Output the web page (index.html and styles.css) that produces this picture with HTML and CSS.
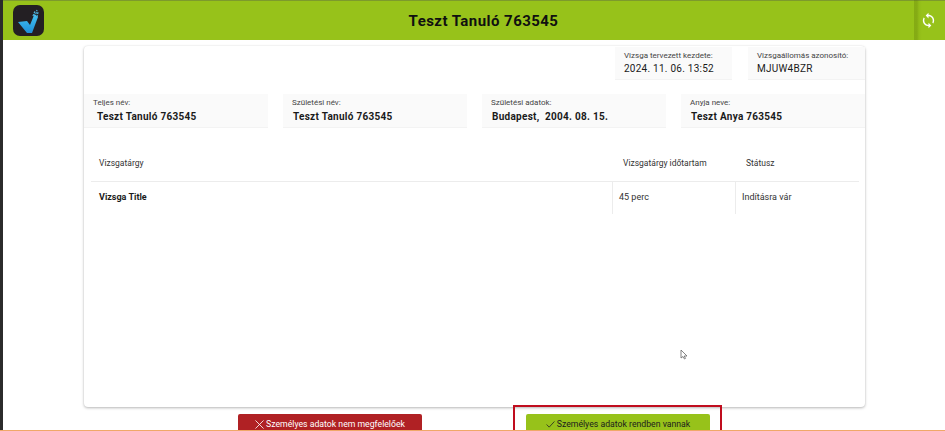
FILE: index.html
```html
<!DOCTYPE html>
<html lang="hu">
<head>
<meta charset="utf-8">
<title>Teszt Tanuló 763545</title>
<link rel="stylesheet" href="styles.css">
</head>
<body>
<div class="strip"></div>
<div class="app">
  <header class="topbar">
    <div class="logo">
      <svg viewBox="0 0 31 31" width="31" height="31">
        <defs>
          <linearGradient id="tick" x1="0" y1="0" x2="0" y2="1">
            <stop offset="0" stop-color="#46c3f2"/>
            <stop offset="1" stop-color="#1d8fd8"/>
          </linearGradient>
        </defs>
        <rect width="31" height="31" rx="7" fill="#231f23"/>
        <path d="M5 17 L14 16 L17 20 L21.500 9 L25 12 L19 28 L14 28 Z" fill="url(#tick)"/>
        <path d="M20 11l2-5M22 12l2-7M24 12l1-5" stroke="#4fb8e6" stroke-width="1.200" stroke-dasharray="2 1" fill="none"/>
      </svg>
    </div>
    <h1 class="title">Teszt Tanuló 763545</h1>
    <button class="refresh" aria-label="Frissítés">
      <svg viewBox="0 0 24 24" width="17" height="17" fill="#fff"><path d="M12 4V1L8 5l4 4V6c3.310 0 6 2.690 6 6 0 1.010-.25 1.970-.7 2.800l1.460 1.460C19.540 15.030 20 13.570 20 12c0-4.420-3.580-8-8-8zm0 14c-3.310 0-6-2.690-6-6 0-1.010.25-1.970.7-2.800L5.240 7.740C4.460 8.970 4 10.430 4 12c0 4.420 3.580 8 8 8v3l4-4-4-4v3z"/></svg>
    </button>
  </header>
  <main class="content">
    <section class="card">
      <div class="row row-top">
        <div class="info small"><span class="label">Vizsga tervezett kezdete:</span><span class="value plain">2024. 11. 06. 13:52</span></div>
        <div class="info small"><span class="label">Vizsgaállomás azonosító:</span><span class="value plain">MJUW4BZR</span></div>
      </div>
      <div class="row row-people">
        <div class="info"><span class="label">Teljes név:</span><span class="value indented">Teszt Tanuló 763545</span></div>
        <div class="info"><span class="label">Születési név:</span><span class="value">Teszt Tanuló 763545</span></div>
        <div class="info"><span class="label">Születési adatok:</span><span class="value">Budapest,&nbsp; 2004. 08. 15.</span></div>
        <div class="info"><span class="label">Anyja neve:</span><span class="value">Teszt Anya 763545</span></div>
      </div>
      <div class="table">
        <div class="cell head first">Vizsgatárgy</div>
        <div class="cell head">Vizsgatárgy időtartam</div>
        <div class="cell head">Státusz</div>
        <div class="cell body first strong">Vizsga Title</div>
        <div class="cell body bar">45 perc</div>
        <div class="cell body bar">Indításra vár</div>
      </div>
    </section>
    <div class="actions">
      <button class="btn btn-red">
        <svg viewBox="0 0 10 10" width="9" height="9"><path d="M.5.5l9 9M9.500.5l-9 9" stroke="#fff" stroke-width=".9" fill="none"/></svg>
        Személyes adatok nem megfelelőek
      </button>
      <div class="highlight">
        <button class="btn btn-green">
          <svg viewBox="0 0 10 8" width="9" height="7"><path d="M.5 4l3 3 6-6.500" stroke="#222" stroke-width=".9" fill="none"/></svg>
          Személyes adatok rendben vannak
        </button>
      </div>
    </div>
  </main>
  <svg class="cursor" viewBox="0 0 8 11" width="8" height="11"><path d="M1 1v8l2-1.500 1.500 2.500 1-.6L4.200 7H7z" fill="#fff" stroke="#666" stroke-width=".8"/></svg>
</div>
<div class="orange-line"></div>
</body>
</html>
```
FILE: styles.css
```css
* { box-sizing: border-box; }
html, body { margin: 0; height: 431px; overflow: hidden; }
body {
  display: flex;
  background: #fff;
  font-family: Roboto, "Liberation Sans", sans-serif;
  color: #212121;
  position: relative;
}
.strip { width: 3px; background: #2b2b2b; flex: none; }
.app { flex: 1; min-width: 0; position: relative; }
.topbar {
  height: 40px;
  background: #97c21a;
  border-top: 1px solid #7d9a2c;
  display: flex;
  align-items: center;
  position: relative;
}
.logo { width: 31px; height: 31px; margin-left: 10px; flex: none; display: flex; }
.title {
  flex: 1;
  margin: 0;
  padding-right: 22px;
  text-align: center;
  font-size: 15px;
  font-weight: 700;
  letter-spacing: .45px;
  color: #101010;
}
.refresh {
  position: absolute;
  right: 0;
  top: -1px;
  width: 31px;
  height: 40px;
  border: 0;
  padding: 0 3px 0 0;
  background: linear-gradient(90deg, rgba(70, 90, 0, .22), rgba(70, 90, 0, .22) 3px, rgba(70, 90, 0, .06) 5px, transparent 8px);
  display: flex;
  align-items: center;
  justify-content: center;
}
.content { padding: 6px 80px 0 81px; }
.card {
  height: 361px;
  background: #fff;
  border-radius: 4px;
  box-shadow: 0 1px 3px rgba(0, 0, 0, .28), 0 0 2px rgba(0, 0, 0, .06);
}
.row { display: flex; gap: 15px; }
.row-top { justify-content: flex-end; height: 48px; gap: 16px; padding-top: 1px; }
.row-people { height: 34px; }
.info {
  flex: 1;
  background: #fafafa;
  border-bottom: 1px solid #f3f3f3;
  display: flex;
  flex-direction: column;
  padding: 4px 9px;
}
.info.small { flex: none; width: 117px; height: 33px; padding-top: 4px; }
.label { font-size: 8px; line-height: 10px; color: #444; white-space: nowrap; }
.value { font-size: 10px; line-height: 14px; margin: 2px 0 0 1px; font-weight: 700; letter-spacing: .28px; color: #1a1a1a; white-space: nowrap; }
.value.indented { margin-left: 4px; }
.value.plain { font-weight: 400; margin: 1px 0 0; letter-spacing: .25px; }
.table {
  margin: 18px 6px 0 7px;
  display: grid;
  grid-template-columns: 521px 123px 124px;
  font-size: 8.500px;
  color: #333;
}
.cell { display: flex; align-items: center; }
.head { height: 36px; padding: 0 0 1px 11px; border-bottom: 1px solid #ececec; }
.body { height: 32px; padding: 0 0 2px 6px; font-size: 9px; }
.head.first, .body.first { padding-left: 8px; }
.bar { border-left: 1px solid #ececec; }
.strong { font-weight: 700; color: #1a1a1a; }
.actions { display: flex; padding-left: 154px; margin-top: -2px; position: relative; }
.btn {
  height: 24px;
  border: 0;
  border-radius: 2px;
  font: 400 8.700px Roboto, "Liberation Sans", sans-serif;
  display: flex;
  align-items: center;
  justify-content: center;
  gap: 2px;
  padding: 0 0 4px;
}
.btn-red { width: 184px; margin-top: 9px; background: #b02124; color: #fff; }
.btn-green { width: 184px; background: #97c21a; color: #1c1c1c; }
.highlight {
  margin-left: 91px;
  width: 209px;
  height: 30px;
  padding: 7px 0 0 11px;
  border: 2px solid #c00d1e;
  border-bottom: 0;
}
.cursor { position: absolute; left: 677px; top: 349px; }
.orange-line { position: absolute; left: 0; right: 0; bottom: 0; height: 1px; background: #f0a868; }
```
